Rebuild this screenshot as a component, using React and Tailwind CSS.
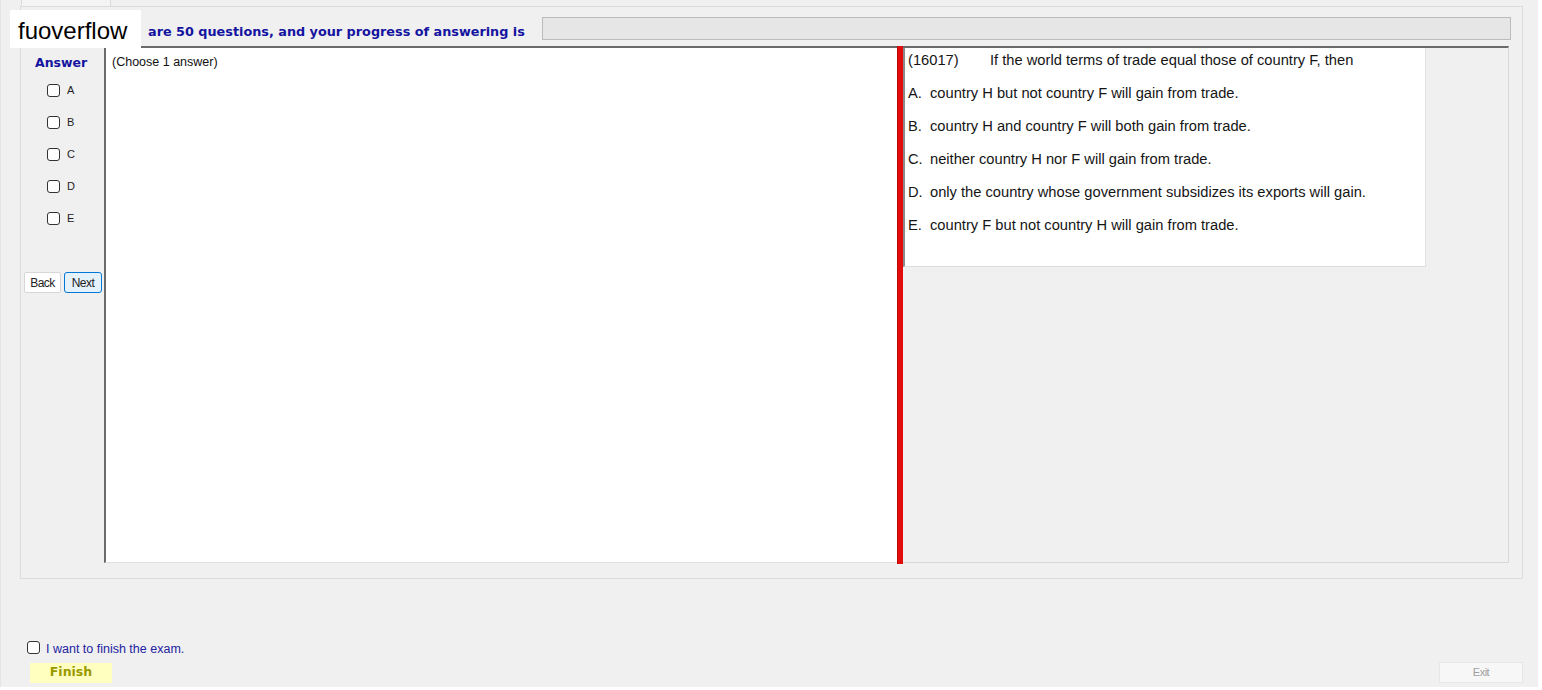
import { useState } from "react";

const options = [
  ["A.", "country H but not country F will gain from trade."],
  ["B.", "country H and country F will both gain from trade."],
  ["C.", "neither country H nor F will gain from trade."],
  ["D.", "only the country whose government subsidizes its exports will gain."],
  ["E.", "country F but not country H will gain from trade."],
];

const letters = ["A", "B", "C", "D", "E"];

function Box({ checked, onClick }) {
  return (
    <span
      onClick={onClick}
      className={`w-[13px] h-[13px] rounded-[3px] border border-[#333] flex items-center justify-center cursor-pointer ${
        checked ? "bg-[#0078d7]" : "bg-white"
      }`}
    />
  );
}

export default function App() {
  const [picked, setPicked] = useState({});
  const [finish, setFinish] = useState(false);

  return (
    <div className="w-[1542px] h-[690px] bg-white overflow-hidden relative font-['Liberation_Sans',Arial,sans-serif]">
      <div className="w-[1538px] h-[687px] bg-[#f0f0f0] border-l border-[#e4e4e4] flex flex-col">
        {/* tab strip */}
        <div className="h-[6px] flex pl-[20px]">
          <div className="w-[90px] h-[6px] bg-[#f4f4f4] border-x border-[#dadada]" />
        </div>

        {/* tab page */}
        <div className="ml-[19px] w-[1503px] h-[573px] border border-[#dcdcdc] flex flex-col">
          {/* header */}
          <div className="mt-[10px] h-[23px] flex">
            <div className="w-[521px] pl-[127px] self-end leading-[16px] text-[12.8px] font-bold text-[#1414a0] whitespace-nowrap font-['DejaVu_Sans',Verdana,sans-serif]">
              are 50 questions, and your progress of answering is
            </div>
            <div className="w-[969px] h-[23px] bg-[#e6e6e6] border border-[#bcbcbc]" />
          </div>

          {/* content */}
          <div className="mt-[6px] h-[517px] flex pl-[1px]">
            {/* answer column */}
            <div className="w-[82px] flex flex-col">
              <div className="pt-[9px] pl-[13px] text-[12.5px] font-bold text-[#1414a0] leading-[16px] font-['DejaVu_Sans',Verdana,sans-serif]">
                Answer
              </div>
              <div className="flex flex-col gap-[19px] pt-[13px]">
                {letters.map((l) => (
                  <div key={l} className="flex items-center gap-[7px] pl-[25px] h-[13px]">
                    <Box
                      checked={picked[l]}
                      onClick={() => setPicked({ ...picked, [l]: !picked[l] })}
                    />
                    <span className="text-[11px] text-[#222]">{l}</span>
                  </div>
                ))}
              </div>
              <div className="mt-[47px] flex gap-[3px] pl-[2px]">
                <button className="w-[37px] h-[21px] bg-white border border-[#d6d6d6] rounded-[2px] text-[12px] text-[#222] tracking-[-0.5px]">
                  Back
                </button>
                <button className="w-[38px] h-[21px] bg-[#e5f1fb] border border-[#0078d7] rounded-[3px] text-[12px] text-[#222] tracking-[-0.5px]">
                  Next
                </button>
              </div>
            </div>

            {/* answer text area */}
            <div className="w-[793px] h-[517px] bg-white border-l-2 border-t-2 border-[#6a6a6a] border-b border-b-[#e0e0e0]">
              <div className="pl-[6px] pt-[5px] text-[12.5px] text-[#111]">
                (Choose 1 answer)
              </div>
            </div>

            {/* splitter */}
            <div className="w-[6px] h-[518px] bg-[#e20c0c] border-l border-[#b80a0a]" />

            {/* question area */}
            <div className="w-[606px] h-[517px] border-t-2 border-[#6a6a6a] border-r border-r-[#d8d8d8] border-b border-b-[#d8d8d8]">
              <div className="w-[523px] h-[219px] bg-white border-l-2 border-[#8a8a8a] border-r border-r-[#e2e2e2] border-b border-b-[#dcdcdc] pl-[3px] pt-[1px] text-[14.7px] text-[#151515]">
                <div className="h-[22px] flex items-center whitespace-nowrap">
                  <span className="w-[82px]">(16017)</span>
                  <span>If the world terms of trade equal those of country F, then</span>
                </div>
                {options.map(([k, t]) => (
                  <div key={k} className="h-[33px] pt-[11px] flex items-center whitespace-nowrap">
                    <span className="w-[22px]">{k}</span>
                    <span>{t}</span>
                  </div>
                ))}
              </div>
            </div>
          </div>
        </div>

        {/* footer */}
        <div className="mt-[58px] flex justify-between items-end pr-[15px]">
          <div className="flex flex-col pl-[26px]">
            <div className="flex items-center gap-[6px]">
              <Box checked={finish} onClick={() => setFinish(!finish)} />
              <span className="text-[12.5px] text-[#2323a0] pt-[3px]">
                I want to finish the exam.
              </span>
            </div>
            <button className="mt-[4px] ml-[3px] w-[82px] h-[20px] bg-[#ffffc0] text-[12.5px] font-bold text-[#9a9a00] font-['DejaVu_Sans',Verdana,sans-serif]">
              Finish
            </button>
          </div>
          <button className="w-[84px] h-[21px] bg-[#f7f7f7] border border-[#e6e6e6] text-[11px] text-[#a0a0a0] tracking-[-0.5px]">
            Exit
          </button>
        </div>
      </div>

      {/* watermark overlay */}
      <div className="absolute left-[10px] top-[10px] w-[131px] h-[38px] bg-white flex items-center pl-[8px] pt-[4px] text-[24px] text-black">
        fuoverflow
      </div>
    </div>
  );
}
